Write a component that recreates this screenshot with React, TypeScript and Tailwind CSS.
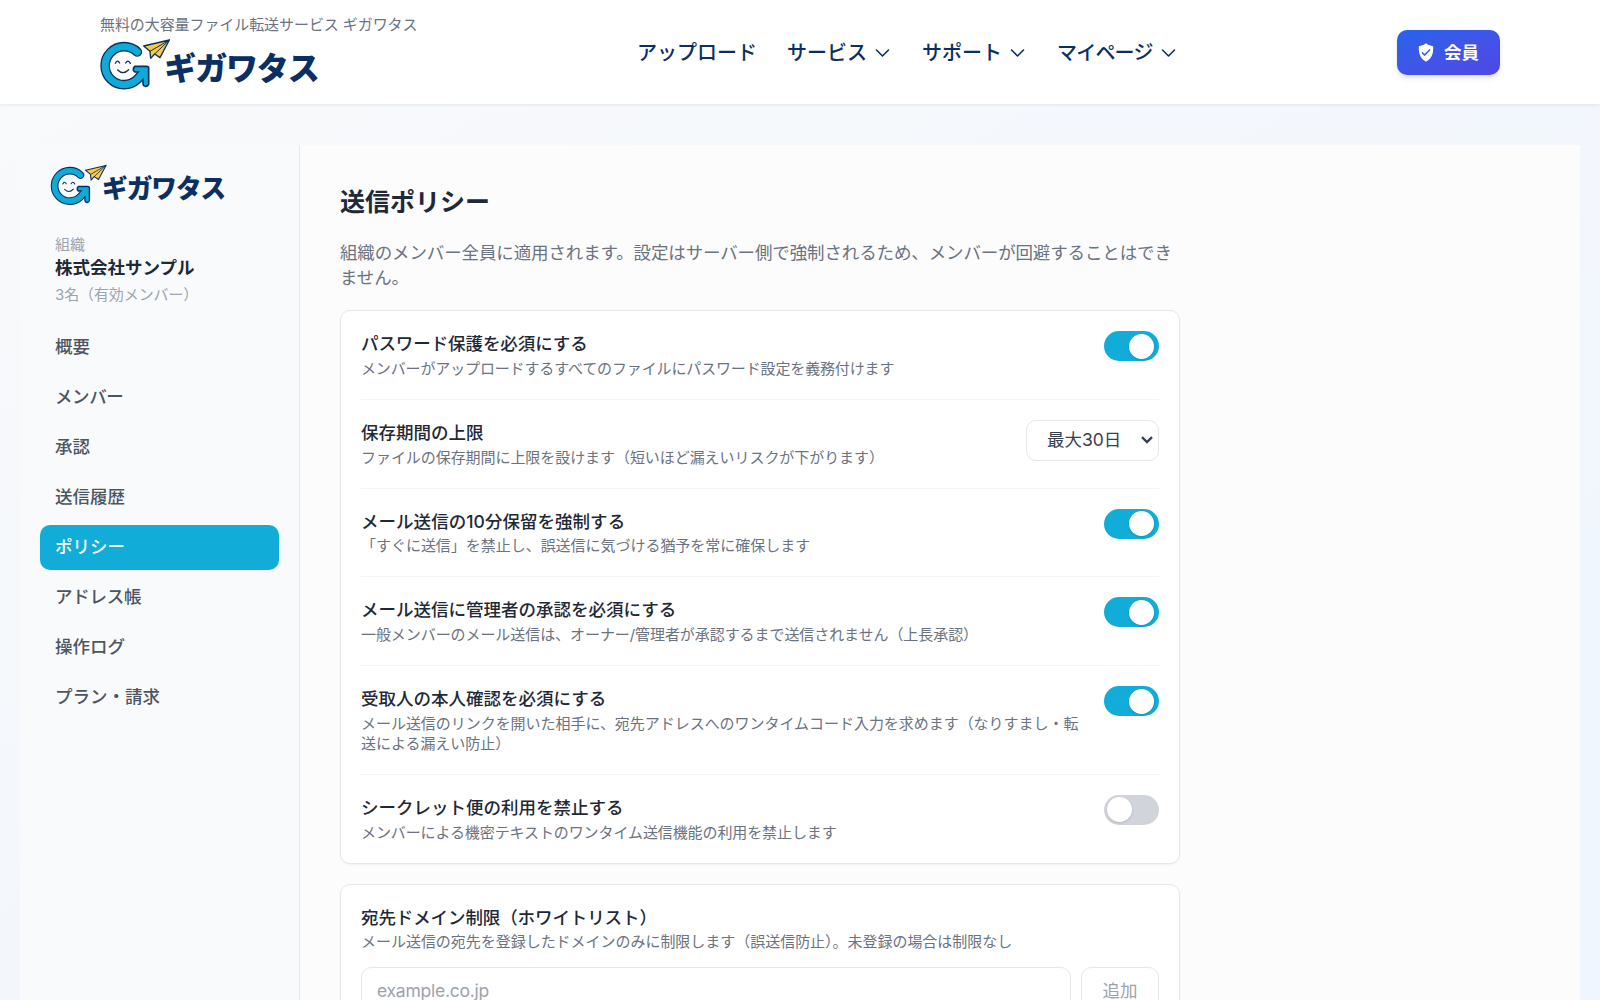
import React from 'react';

interface Policy {
  title: string;
  titleClass?: string;
  description: string;
  descriptionClass: string;
  control: 'on' | 'off' | 'select';
}

const navItems = [
  { label: 'アップロード', menu: false, tracking: '' },
  { label: 'サービス', menu: true, tracking: '' },
  { label: 'サポート', menu: true, tracking: '' },
  { label: 'マイページ', menu: true, tracking: 'tracking-[-0.8px]' },
];

const sideItems = [
  { label: '概要', tracking: '' },
  { label: 'メンバー', tracking: 'tracking-[-0.4px]' },
  { label: '承認', tracking: '' },
  { label: '送信履歴', tracking: '' },
  { label: 'ポリシー', tracking: '' },
  { label: 'アドレス帳', tracking: 'tracking-[-0.25px]' },
  { label: '操作ログ', tracking: '' },
  { label: 'プラン・請求', tracking: '' },
];

const policies: Policy[] = [
  {
    title: 'パスワード保護を必須にする',
    titleClass: 'tracking-[-0.08px]',
    description: 'メンバーがアップロードするすべてのファイルにパスワード設定を義務付けます',
    descriptionClass: 'tracking-[-0.14px]',
    control: 'on',
  },
  {
    title: '保存期間の上限',
    description: 'ファイルの保存期間に上限を設けます（短いほど漏えいリスクが下がります）',
    descriptionClass: 'tracking-[-0.06px]',
    control: 'select',
  },
  {
    title: 'メール送信の10分保留を強制する',
    titleClass: 'tracking-[0.04px]',
    description: '「すぐに送信」を禁止し、誤送信に気づける猶予を常に確保します',
    descriptionClass: 'tracking-[-0.03px]',
    control: 'on',
  },
  {
    title: 'メール送信に管理者の承認を必須にする',
    description: '一般メンバーのメール送信は、オーナー/管理者が承認するまで送信されません（上長承認）',
    descriptionClass: 'tracking-[-0.07px]',
    control: 'on',
  },
  {
    title: '受取人の本人確認を必須にする',
    description:
      'メール送信のリンクを開いた相手に、宛先アドレスへのワンタイムコード入力を求めます（なりすまし・転送による漏えい防止）',
    descriptionClass: 'tracking-[-0.04px]',
    control: 'on',
  },
  {
    title: 'シークレット便の利用を禁止する',
    description: 'メンバーによる機密テキストのワンタイム送信機能の利用を禁止します',
    descriptionClass: 'tracking-[-0.1px]',
    control: 'off',
  },
];

const Logo: React.FC<{ className: string }> = ({ className }) => (
  <svg viewBox="0 0 660 165" className={className} role="img" aria-label="ギガワタス">
    <g fill="none" strokeLinecap="round" strokeLinejoin="round">
      <path d="M112 45 A57 57 0 1 0 112 127 L128 108" stroke="#0b2f63" strokeWidth="29" />
      <path d="M104 88 H140 Q146 88 146 94 V141 Q144 148 137 148 Q130 148 129 141 V124 L115 137 L101 123 L119 105 H104 Q96 97 104 88Z" fill="#0fabd6" stroke="#0b2f63" strokeWidth="5" />
      <path d="M112 45 A57 57 0 1 0 112 127 L126 111" stroke="#0fabd6" strokeWidth="21" />
      <path d="M46 79 Q52 66 59 78 M77 78 Q84 66 91 79 M53 99 Q69 115 86 98" stroke="#0b2f63" strokeWidth="4" />
      <path d="M131 27 L208 9 L180 62 L164 51 L152 64 L150 43Z" fill="#fbc93d" stroke="#0b2f63" strokeWidth="4" />
      <path d="M208 9 L150 43 M208 9 L164 51" stroke="#0b2f63" strokeWidth="3" />
    </g>
    <text x="193" y="130" fontSize="96" fontWeight="900" textLength="466" fill="#0b2f63" fontFamily="'Noto Sans CJK JP', sans-serif">
      ギガワタス
    </text>
  </svg>
);

const Toggle: React.FC<{ on: boolean }> = ({ on }) => (
  <button
    role="switch"
    aria-checked={on}
    className={`flex h-[30px] w-[55px] shrink-0 items-center rounded-full ${
      on ? 'justify-end bg-[#12acd8] pr-[5px]' : 'justify-start bg-[#d1d5db] pl-[2.5px]'
    }`}
  >
    <span className="size-[25px] rounded-full bg-white shadow" />
  </button>
);

const PeriodSelect: React.FC = () => (
  <button className="flex h-[41px] w-[133px] shrink-0 items-center justify-between rounded-[10px] border border-[#e5e7eb] bg-white pl-5 pr-[5px] text-[17.5px] text-[#374151]">
    最大30日
    <svg viewBox="0 0 12 8" className="h-2 w-3" fill="none" stroke="currentColor" strokeWidth="2.4">
      <path d="M1 1.2 L6 6 L11 1.2" />
    </svg>
  </button>
);

const Header: React.FC = () => (
  <header className="relative flex h-[104px] items-start bg-white px-[100px] shadow-[0_1px_3px_rgba(0,0,0,0.08)]">
    <div className="flex w-[537px] flex-col pt-[15px]">
      <span className="text-[15px] leading-5 tracking-[-0.08px] text-[#6b7280]">無料の大容量ファイル転送サービス ギガワタス</span>
      <Logo className="mt-[2px] h-[55px] w-[220px]" />
    </div>
    <nav className="flex h-[106px] items-center gap-[30px] text-[20px] font-medium text-[#0b2f63]">
      {navItems.map((item) => (
        <a key={item.label} className={`flex items-center gap-[5px] whitespace-nowrap ${item.tracking}`}>
          {item.label}
          {item.menu && (
            <svg viewBox="0 0 20 20" className="size-5" fill="none" stroke="currentColor" strokeWidth="1.6" strokeLinecap="round" strokeLinejoin="round">
              <path d="M4.5 7 L10.5 13 L16.5 7" />
            </svg>
          )}
        </a>
      ))}
    </nav>
    <button className="ml-auto mt-[30px] flex h-[45px] w-[103px] items-center justify-center gap-[10px] rounded-[10px] bg-gradient-to-br from-[#2563eb] to-[#4f46e5] text-[17.5px] font-bold text-white shadow-md">
      <svg viewBox="0 0 48 58" className="h-[19px] w-4">
        <path
          d="M24 1 C19 5 12 8 5 9 Q2 9.5 2 12 C1 34 8 48 24 57 C40 48 47 34 46 12 Q46 9.5 43 9 C36 8 29 5 24 1Z"
          fill="currentColor"
        />
        <path d="M13 30 L20 37 L35 21" fill="none" stroke="#2f5de9" strokeWidth="4.5" strokeLinecap="round" strokeLinejoin="round" />
      </svg>
      <span className="pt-px">会員</span>
    </button>
  </header>
);

const Sidebar: React.FC = () => (
  <aside className="w-[280px] shrink-0 border-r border-[#e5e7eb] bg-[#f9fafb] px-5 pt-[18px]">
    <Logo className="ml-[10px] h-[44px] w-[177px]" />
    <div className="mt-7 px-[15px]">
      <p className="text-[15px] leading-5 text-[#9ca3af]">組織</p>
      <p className="text-[17.5px] font-bold leading-[25px] text-[#1f2937]">株式会社サンプル</p>
      <p className="mt-[5px] text-[15px] leading-5 tracking-[-0.1px] text-[#9ca3af]">3名（有効メンバー）</p>
    </div>
    <nav className="mt-5 flex flex-col gap-[5px]">
      {sideItems.map((item) => (
        <a
          key={item.label}
          className={`flex h-[45px] items-center rounded-[10px] px-[15px] text-[17.5px] font-medium ${item.tracking} ${
            item.label === 'ポリシー' ? 'bg-[#12acd8] text-white' : 'text-[#4b5563]'
          }`}
        >
          {item.label}
        </a>
      ))}
    </nav>
  </aside>
);

export default function App() {
  return (
    <div
      className="flex h-screen flex-col overflow-hidden bg-gradient-to-br from-[#f9fafb] via-[#f3f7fc] to-[#eff6ff] font-['Inter','Noto_Sans_CJK_JP',sans-serif]"
      lang="ja"
    >
      <Header />
      <div className="mx-5 mt-[41px] flex min-h-0 flex-1">
        <Sidebar />
        <main className="flex-1 bg-[#fcfcfc] p-10">
          <div className="w-[840px]">
            <h1 className="text-[25px] font-bold leading-[35px] text-[#1f2937]">送信ポリシー</h1>
            <p className="mt-5 text-[17.5px] leading-[25px] tracking-[-0.13px] text-[#6b7280]">
              組織のメンバー全員に適用されます。設定はサーバー側で強制されるため、メンバーが回避することはでき
              <br />
              ません。
            </p>

            <section className="mt-5 divide-y divide-[#f3f4f6] rounded-[10px] border border-[#e5e7eb] bg-white px-5 shadow-[0_1px_2px_rgba(0,0,0,0.05)]">
              {policies.map((policy) => (
                <div key={policy.title} className="flex items-start justify-between gap-5 py-5">
                  <div>
                    <h2 className={`text-[17.5px] font-medium leading-[25px] text-[#1f2937] ${policy.titleClass ?? ''}`}>{policy.title}</h2>
                    <p className={`mt-[2.75px] text-[15px] leading-5 text-[#6b7280] ${policy.descriptionClass}`}>{policy.description}</p>
                  </div>
                  {policy.control === 'select' ? <PeriodSelect /> : <Toggle on={policy.control === 'on'} />}
                </div>
              ))}
            </section>

            <section className="mt-5 rounded-[10px] border border-[#e5e7eb] bg-white p-5 shadow-[0_1px_2px_rgba(0,0,0,0.05)]">
              <h2 className="text-[17.5px] font-medium leading-[25px] tracking-[-0.1px] text-[#1f2937]">宛先ドメイン制限（ホワイトリスト）</h2>
              <p className="mt-[2.75px] text-[15px] leading-5 tracking-[-0.03px] text-[#6b7280]">
                メール送信の宛先を登録したドメインのみに制限します（誤送信防止）。未登録の場合は制限なし
              </p>
              <div className="mt-[15px] flex gap-[10px]">
                <input
                  placeholder="example.co.jp"
                  className="h-[47px] min-w-0 flex-1 rounded-[10px] border border-[#e5e7eb] px-[15px] text-[17.5px] tracking-[-0.25px] placeholder:text-[#9ca3af]"
                />
                <button className="h-[47px] w-[78px] rounded-[10px] border border-[#e5e7eb] text-[17.5px] text-[#9ca3af]">追加</button>
              </div>
            </section>
          </div>
        </main>
      </div>
    </div>
  );
}
